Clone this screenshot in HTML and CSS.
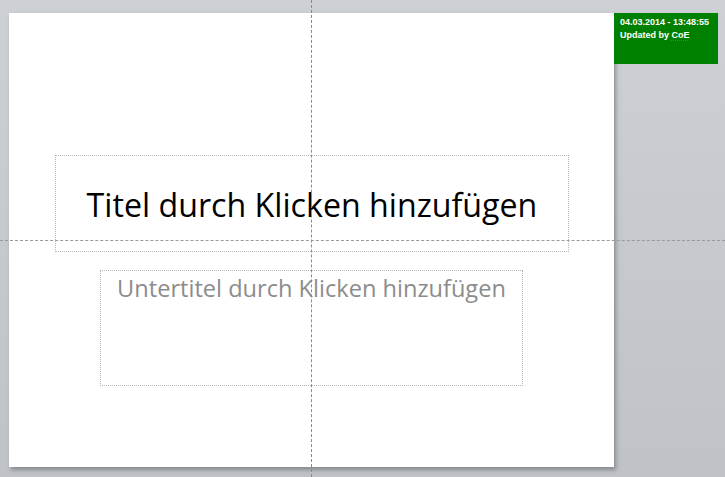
FILE: index.html
```html
<!DOCTYPE html>
<html lang="de">

<head>
    <meta charset="UTF-8">
    <meta name="viewport" content="width=device-width, initial-scale=1.0">
    <title>Folie</title>
    <link rel="stylesheet" href="styles.css">
</head>

<body>
    <div class="workspace">
        <div class="slide">
            <div class="placeholder title-box">
                <span class="title-text">Titel durch Klicken hinzufügen</span>
            </div>
            <div class="placeholder subtitle-box">
                <span class="subtitle-text">Untertitel durch Klicken hinzufügen</span>
            </div>
        </div>
        <div class="stamp">
            <div>04.03.2014 - 13:48:55</div>
            <div>Updated by <span class="spell">CoE</span></div>
        </div>
        <div class="guide guide-v"></div>
        <div class="guide guide-h"></div>
    </div>
</body>

</html>
```

FILE: styles.css
```css
* {
    box-sizing: border-box;
}

html,
body {
    margin: 0;
    padding: 0;
    height: 100%;
}

body {
    font-family: "Open Sans", Arial, sans-serif;
    background: linear-gradient(#cdd0d4, #bfc2c6);
    overflow: hidden;
}

.workspace {
    position: relative;
    display: flex;
    align-items: flex-start;
    height: 477px;
    padding: 13px 0 0 9px;
}

.slide {
    width: 605px;
    height: 454px;
    background: #fff;
    box-shadow: 2px 3px 4px rgba(90, 95, 100, 0.55);
    display: flex;
    flex-direction: column;
    flex-shrink: 0;
}

.placeholder {
    border: 1px dotted #b4b4b4;
    display: flex;
    justify-content: center;
}

.title-box {
    width: 514px;
    height: 97px;
    margin: 142px 0 0 46px;
    align-items: center;
}

.title-text {
    font-family: "Open Sans", sans-serif;
    font-size: 32.2px;
    color: #000;
    padding-top: 1px;
}

.subtitle-box {
    width: 423px;
    height: 116px;
    margin: 18px 0 0 91px;
    align-items: flex-start;
}

.subtitle-text {
    font-family: "Open Sans", sans-serif;
    font-size: 23.6px;
    color: #8c8c8c;
    margin-top: 1px;
}

.stamp {
    width: 104px;
    height: 51px;
    background: #008000;
    color: #fff;
    font-family: "Liberation Sans", Arial, sans-serif;
    font-weight: bold;
    font-size: 9px;
    line-height: 13px;
    padding: 3px 0 0 6px;
}

.spell {
    text-decoration: underline dotted #d04040;
    text-underline-offset: 2px;
}

.guide {
    position: absolute;
}

.guide-v {
    left: 311px;
    top: 0;
    bottom: 0;
    border-left: 1px dashed #8a8a8a;
}

.guide-h {
    top: 240px;
    left: 0;
    right: 0;
    border-top: 1px dashed #9a9a9a;
}
```
